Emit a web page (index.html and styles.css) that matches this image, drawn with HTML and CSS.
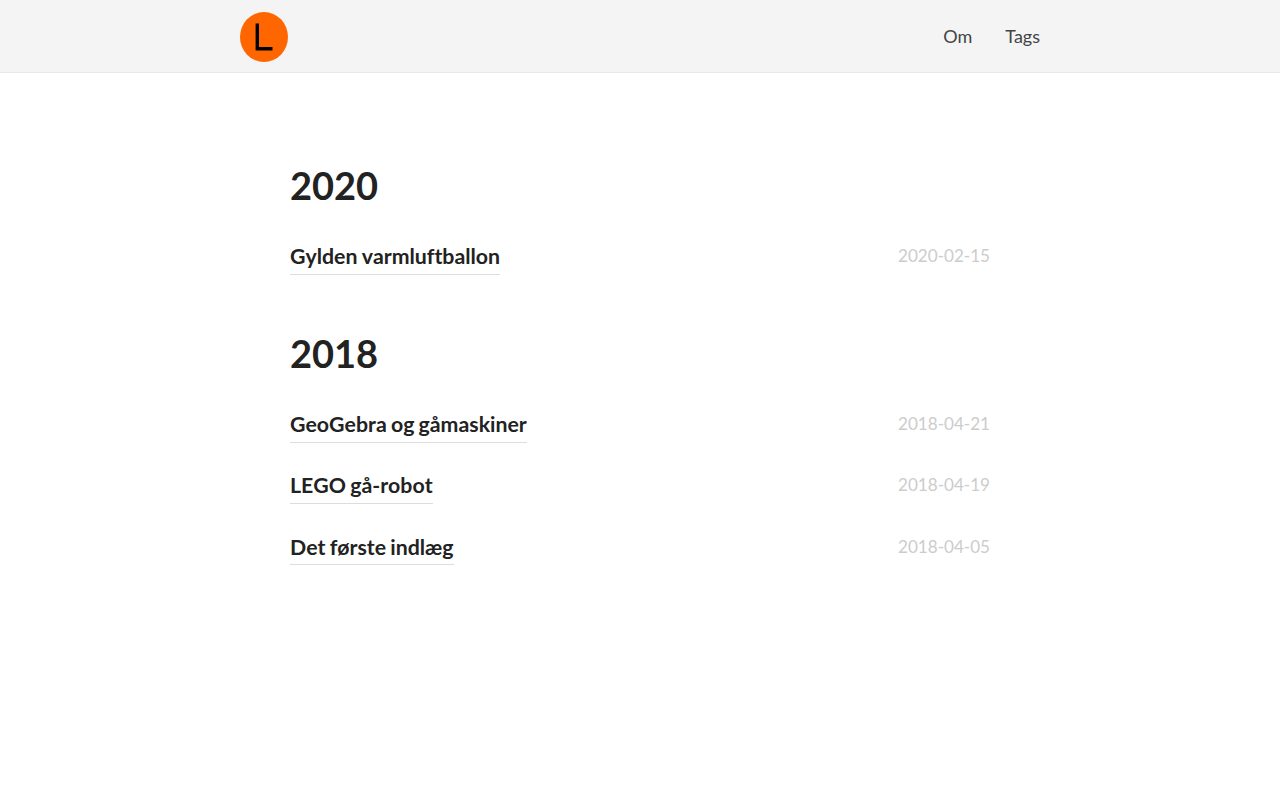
FILE: index.html
```html
<!DOCTYPE html>
<html lang="da">

<head>
    <meta charset="UTF-8">
    <meta name="viewport" content="width=device-width, initial-scale=1.0">
    <title>Arkiv</title>
    <link rel="stylesheet" href="styles.css">
</head>

<body>
    <header class="site-header">
        <div class="site-header-inner">
            <a class="logo" href="#" aria-label="Forside">
                <svg width="48" height="50" viewBox="0 0 48 50">
                    <ellipse cx="24" cy="25" rx="24" ry="25" fill="#ff6600" />
                    <path d="M17.3 11.5V36.8H32.5" fill="none" stroke="#000" stroke-width="3.4" />
                </svg>
            </a>
            <nav class="nav">
                <a href="#">Om</a>
                <a href="#">Tags</a>
            </nav>
        </div>
    </header>

    <main class="archive">
        <section class="year">
            <h2>2020</h2>
            <article class="post">
                <h3><a href="#">Gylden varmluftballon</a></h3>
                <time datetime="2020-02-15">2020-02-15</time>
            </article>
        </section>
        <section class="year">
            <h2>2018</h2>
            <article class="post">
                <h3><a href="#">GeoGebra og gåmaskiner</a></h3>
                <time datetime="2018-04-21">2018-04-21</time>
            </article>
            <article class="post">
                <h3><a href="#">LEGO gå-robot</a></h3>
                <time datetime="2018-04-19">2018-04-19</time>
            </article>
            <article class="post">
                <h3><a href="#">Det første indlæg</a></h3>
                <time datetime="2018-04-05">2018-04-05</time>
            </article>
        </section>
    </main>
</body>

</html>
```
FILE: styles.css
```css
* {
    box-sizing: border-box;
}

body {
    margin: 0;
    background: #fff;
    color: #222;
    font-family: Lato, "Liberation Sans", sans-serif;
    font-size: 18px;
    font-variant-ligatures: none;
}

a {
    color: inherit;
    text-decoration: none;
}

.site-header {
    height: 73px;
    background: #f4f4f4;
    border-bottom: 1px solid #e8e8e8;
}

.site-header-inner {
    display: flex;
    justify-content: space-between;
    width: 800px;
    margin: 0 auto;
    padding-top: 12px;
}

.logo svg {
    display: block;
}

.nav {
    display: flex;
    gap: 33px;
    line-height: 48px;
    color: #444;
}

.archive {
    width: 700px;
    margin: 0 auto;
    padding-top: 89px;
}

.year {
    margin-bottom: 55px;
}

.year h2 {
    margin: 0 0 34px;
    font-size: 38px;
    line-height: 46px;
}

.post {
    display: flex;
    justify-content: space-between;
    height: 33px;
    margin-bottom: 28.3px;
}

.post h3 {
    margin: 0;
    font-size: 21.3px;
    line-height: 28px;
    word-spacing: -1px;
    font-kerning: none;
}

.post h3 a {
    display: block;
    height: 32.8px;
    border-bottom: 1px solid #ddd;
}

.post time {
    color: #ccc;
    font-size: 17.1px;
    line-height: 28px;
}
```
